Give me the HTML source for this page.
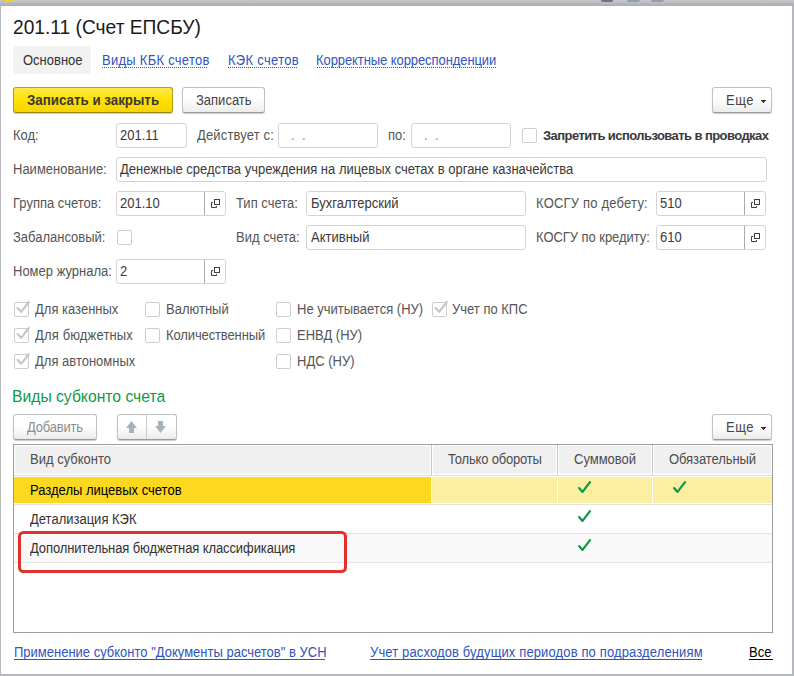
<!DOCTYPE html>
<html><head><meta charset="utf-8">
<style>
*{box-sizing:border-box;margin:0;padding:0}
html,body{width:794px;height:676px;overflow:hidden;background:#b0b2b5}
body{position:relative;font-family:"Liberation Sans",sans-serif;font-size:13px;color:#4d4d4d}
.abs{position:absolute}
.frame{position:absolute;left:0;top:0;width:794px;height:676px;background:linear-gradient(#c4c6c9,#b9bbbe 3px,#a8aaad 6px,#b6b8bb 6px)}
.panel{position:absolute;left:1px;top:6px;width:791px;height:668px;background:#fff}
.t{position:absolute;white-space:nowrap;line-height:15px;font-size:13px;transform:scaleY(1.1);transform-origin:0 7.5px}
.lbl{color:#555}
.val{color:#3a3a3a}
.inp{position:absolute;height:25px;border:1px solid #d4d4d4;border-radius:3px;background:#fff}
.sel{position:absolute;top:0;bottom:0;width:1px;background:#ababab}
.cb{position:absolute;width:15px;height:15px;border:1px solid #cdcdcd;border-radius:2px;background:#fff}
.btn{position:absolute;height:26px;border:1px solid #c2c2c2;border-bottom-color:#9a9a9a;border-radius:3px;background:linear-gradient(#fff 0%,#fff 45%,#ececec 100%);box-shadow:0 1px 1px rgba(0,0,0,.22)}
.link{color:#2f55bd}
.ul{position:absolute;height:1px;background:#2f55bd}
.dl{position:absolute;height:1px;background:repeating-linear-gradient(90deg,#2f55bd 0 1px,transparent 1px 2px)}
.hc{position:absolute;top:445px;height:30px;border:1px solid #fff;background:#f0f0f0}
.vs{position:absolute;top:445px;width:1px;height:30px;background:#c9c9c9}
.hs{position:absolute;left:14px;width:758px;height:1px;background:#e2e2e2}
</style></head><body>
<div class="frame"></div>
<div class="panel"></div>
<div class="abs" style="left:4px;top:-3.5px;width:10px;height:5.5px;border-radius:50%;background:#f3d21e"></div>
<div class="abs" style="left:601px;top:0;width:12px;height:1.5px;border-radius:0 0 2px 2px;background:#66758a"></div>
<div class="abs" style="left:627px;top:0;width:13px;height:1.8px;border-radius:0 0 3px 3px;background:#939fab"></div>
<div class="abs" style="left:651px;top:0;width:13px;height:1.8px;border-radius:0 0 3px 3px;background:#939fab"></div>

<!-- title -->
<div class="abs" style="left:13px;top:17px;font-size:19.2px;line-height:22px;color:#1a1a1a;white-space:nowrap;transform:scaleY(1.08);transform-origin:0 11px">201.11 (Счет ЕПСБУ)</div>

<!-- tabs -->
<div class="abs" style="left:13px;top:46px;width:78px;height:28px;background:#f2f2f2;border-radius:4px"></div>
<div class="t" style="left:23px;top:53px;color:#333">Основное</div>
<div class="t link" style="left:102px;top:53px;letter-spacing:0.27px">Виды КБК счетов</div>
<div class="dl" style="left:102px;top:67px;width:106px"></div>
<div class="t link" style="left:228px;top:53px;letter-spacing:0.3px">КЭК счетов</div>
<div class="dl" style="left:228px;top:67px;width:69px"></div>
<div class="t link" style="left:316px;top:53px;letter-spacing:-0.08px">Корректные корреспонденции</div>
<div class="dl" style="left:317px;top:67px;width:179px"></div>

<!-- buttons -->
<div class="abs" style="left:13px;top:87px;width:160px;height:26px;border:1px solid #b59c1e;border-bottom-color:#9a8414;border-radius:3px;background:linear-gradient(#fde94e,#ffe100 50%,#f7d500);box-shadow:0 1px 1px rgba(0,0,0,.22)"></div>
<div class="t" style="left:27px;top:93px;font-weight:bold;font-size:13.33px;color:#3c3a30">Записать и закрыть</div>
<div class="btn" style="left:182px;top:87px;width:83px"></div>
<div class="t" style="left:196px;top:93px;color:#444">Записать</div>
<div class="btn" style="left:712px;top:87px;width:60px"></div>
<div class="t" style="left:726px;top:93px;color:#444;letter-spacing:0.5px">Еще</div>
<div class="abs" style="left:761px;top:100px;width:5px;height:1px;background:#333"></div><div class="abs" style="left:762px;top:101px;width:3px;height:1px;background:#333"></div><div class="abs" style="left:763px;top:102px;width:1px;height:1px;background:#333"></div>

<!-- row 1 -->
<div class="t lbl" style="left:13px;top:128px">Код:</div>
<div class="inp" style="left:116px;top:123px;width:71px"></div>
<div class="t val" style="left:120px;top:128px">201.11</div>
<div class="t lbl" style="left:197px;top:128px;letter-spacing:0.15px">Действует с:</div>
<div class="inp" style="left:278px;top:123px;width:100px"></div>
<div class="t" style="left:291px;top:128px;color:#8a8a8a">.</div><div class="t" style="left:302px;top:128px;color:#8a8a8a">.</div>
<div class="t lbl" style="left:388px;top:128px">по:</div>
<div class="inp" style="left:411px;top:123px;width:100px"></div>
<div class="t" style="left:424px;top:128px;color:#8a8a8a">.</div><div class="t" style="left:435px;top:128px;color:#8a8a8a">.</div>
<div class="cb" style="left:522px;top:128px"></div>
<div class="t" style="left:543px;top:128px;font-weight:bold;color:#3a3a3a;letter-spacing:-0.57px;transform:none">Запретить использовать в проводках</div>

<!-- row 2 -->
<div class="t lbl" style="left:13px;top:162px">Наименование:</div>
<div class="inp" style="left:116px;top:157px;width:651px"></div>
<div class="t val" style="left:120px;top:162px">Денежные средства учреждения на лицевых счетах в органе казначейства</div>

<!-- row 3 -->
<div class="t lbl" style="left:13px;top:196px">Группа счетов:</div>
<div class="inp" style="left:116px;top:191px;width:110px"><div class="sel" style="left:87px"></div></div>
<div class="t val" style="left:120px;top:196px">201.10</div>
<div class="t lbl" style="left:236px;top:196px">Тип счета:</div>
<div class="inp" style="left:306px;top:191px;width:220px"></div>
<div class="t val" style="left:311px;top:196px">Бухгалтерский</div>
<div class="t lbl" style="left:536px;top:196px;letter-spacing:0.2px">КОСГУ по дебету:</div>
<div class="inp" style="left:656px;top:191px;width:110px"><div class="sel" style="left:87px"></div></div>
<div class="t val" style="left:660px;top:196px">510</div>

<!-- row 4 -->
<div class="t lbl" style="left:13px;top:230px">Забалансовый:</div>
<div class="cb" style="left:117px;top:230px"></div>
<div class="t lbl" style="left:236px;top:230px">Вид счета:</div>
<div class="inp" style="left:306px;top:225px;width:220px"></div>
<div class="t val" style="left:311px;top:230px">Активный</div>
<div class="t lbl" style="left:536px;top:230px;letter-spacing:-0.05px">КОСГУ по кредиту:</div>
<div class="inp" style="left:656px;top:225px;width:110px"><div class="sel" style="left:87px"></div></div>
<div class="t val" style="left:660px;top:230px">610</div>

<!-- row 5 -->
<div class="t lbl" style="left:13px;top:264px">Номер журнала:</div>
<div class="inp" style="left:116px;top:259px;width:110px"><div class="sel" style="left:87px"></div></div>
<div class="t val" style="left:120px;top:264px">2</div>

<svg class="abs" style="left:0;top:0" width="794" height="676">
<defs>
<g id="ic" fill="none" stroke="#404040" stroke-width="1">
<rect x="3.5" y="0.5" width="5" height="5"/>
<path d="M2 3.5H0.5V8.5H5.5V7"/>
</g>
<g id="ck" fill="none" stroke="#c6c6c6" stroke-width="2.2" stroke-linecap="round" stroke-linejoin="round">
<path d="M3.6 7 L7.2 10.8 L14.8 1"/>
</g>
<g id="gk" fill="none" stroke="#0f9a46" stroke-width="2.3" stroke-linecap="round" stroke-linejoin="round">
<path d="M0.1 6.1 L3.5 9.9 L11 0.1"/>
</g>
</defs>
<use href="#ic" x="211" y="199"/>
<use href="#ic" x="751" y="199"/>
<use href="#ic" x="751" y="233"/>
<use href="#ic" x="211" y="267"/>
</svg>

<!-- checkboxes -->
<div class="cb" style="left:14px;top:302px"></div>
<div class="t lbl" style="left:35px;top:302px">Для казенных</div>
<div class="cb" style="left:14px;top:328px"></div>
<div class="t lbl" style="left:35px;top:328px;letter-spacing:0.15px">Для бюджетных</div>
<div class="cb" style="left:14px;top:354px"></div>
<div class="t lbl" style="left:35px;top:354px">Для автономных</div>

<div class="cb" style="left:145px;top:302px"></div>
<div class="t lbl" style="left:166px;top:302px">Валютный</div>
<div class="cb" style="left:145px;top:328px"></div>
<div class="t lbl" style="left:166px;top:328px;letter-spacing:-0.12px">Количественный</div>

<div class="cb" style="left:276px;top:302px"></div>
<div class="t lbl" style="left:297px;top:302px">Не учитывается (НУ)</div>
<div class="cb" style="left:276px;top:328px"></div>
<div class="t lbl" style="left:297px;top:328px">ЕНВД (НУ)</div>
<div class="cb" style="left:276px;top:354px"></div>
<div class="t lbl" style="left:297px;top:354px">НДС (НУ)</div>

<div class="cb" style="left:432px;top:302px"></div>
<div class="t lbl" style="left:452px;top:302px">Учет по КПС</div>

<svg class="abs" style="left:0;top:0" width="794" height="676">
<use href="#ck" x="14" y="301"/>
<use href="#ck" x="14" y="327"/>
<use href="#ck" x="14" y="353"/>
<use href="#ck" x="432" y="301"/>
</svg>

<!-- heading -->
<div class="abs" style="left:12px;top:388px;font-size:15.7px;line-height:18px;color:#0d9a45;white-space:nowrap;transform:scaleY(1.06);transform-origin:0 9px">Виды субконто счета</div>

<!-- table command bar -->
<div class="btn" style="left:13px;top:414px;width:84px"></div>
<div class="t" style="left:27px;top:420px;color:#8c8c8c;letter-spacing:-0.2px">Добавить</div>
<div class="btn" style="left:117px;top:414px;width:60px"><div class="abs" style="left:28px;top:0;bottom:0;width:1px;background:#c9c9c9"></div></div>
<svg class="abs" style="left:0;top:0" width="794" height="676">
<path d="M126 428 L131.5 421 L137 428 H134 V433 H129 V428 Z" fill="#a9b3bb"/>
<path d="M155 426 L160.5 433 L166 426 H163 V421 H158 V426 Z" fill="#a9b3bb"/>
</svg>
<div class="btn" style="left:712px;top:414px;width:60px"></div>
<div class="t" style="left:726px;top:420px;color:#444;letter-spacing:0.5px">Еще</div>
<div class="abs" style="left:761px;top:427px;width:5px;height:1px;background:#333"></div><div class="abs" style="left:762px;top:428px;width:3px;height:1px;background:#333"></div><div class="abs" style="left:763px;top:429px;width:1px;height:1px;background:#333"></div>

<!-- table -->
<div class="abs" style="left:13px;top:444px;width:760px;height:189px;border:1px solid #9c9c9c;background:#fff"></div>
<!-- header -->
<div class="hc" style="left:14px;width:417px"></div>
<div class="hc" style="left:432px;width:125px"></div>
<div class="hc" style="left:558px;width:94px"></div>
<div class="hc" style="left:653px;width:119px"></div>
<div class="vs" style="left:431px"></div>
<div class="vs" style="left:557px"></div>
<div class="vs" style="left:652px"></div>
<div class="abs" style="left:14px;top:475px;width:758px;height:1px;background:#dcdce2"></div>
<div class="t" style="left:30px;top:452px;color:#4d4d4d">Вид субконто</div>
<div class="t" style="left:448px;top:452px;color:#4d4d4d;letter-spacing:-0.18px">Только обороты</div>
<div class="t" style="left:574px;top:452px;color:#4d4d4d">Суммовой</div>
<div class="t" style="left:669px;top:452px;color:#4d4d4d;letter-spacing:-0.08px">Обязательный</div>

<!-- row 1 -->
<div class="abs" style="left:14px;top:477px;width:417px;height:26px;background:#fcd91f"></div>
<div class="abs" style="left:432px;top:477px;width:125px;height:26px;background:#fcefa2"></div>
<div class="abs" style="left:558px;top:477px;width:94px;height:26px;background:#fcefa2"></div>
<div class="abs" style="left:653px;top:477px;width:119px;height:26px;background:#fcefa2"></div>
<div class="t" style="left:30px;top:483px;color:#000">Разделы лицевых счетов</div>
<div class="hs" style="top:504px"></div>
<!-- row 2 -->
<div class="t" style="left:30px;top:512px;color:#333">Детализация КЭК</div>
<div class="hs" style="top:533px"></div>
<!-- row 3 -->
<div class="abs" style="left:14px;top:534px;width:758px;height:28px;background:#f9f9f9"></div>
<div class="t" style="left:30px;top:541px;color:#333;letter-spacing:-0.1px">Дополнительная бюджетная классификация</div>
<div class="hs" style="top:562px"></div>

<svg class="abs" style="left:0;top:0" width="794" height="676">
<use href="#gk" x="579" y="482"/>
<use href="#gk" x="674" y="482"/>
<use href="#gk" x="579" y="511"/>
<use href="#gk" x="579" y="540"/>
<rect x="19.5" y="532.5" width="326" height="39" rx="4" fill="none" stroke="#e0322a" stroke-width="3"/>
</svg>

<!-- bottom links -->
<div class="t link" style="left:14px;top:645px">Применение субконто "Документы расчетов" в УСН</div>
<div class="ul" style="left:14px;top:659px;width:311px"></div>
<div class="t link" style="left:370px;top:645px;letter-spacing:0.13px">Учет расходов будущих периодов по подразделениям</div>
<div class="ul" style="left:370px;top:659px;width:332px"></div>
<div class="t" style="left:749px;top:645px;color:#000">Все</div>
<div class="ul" style="left:749px;top:659px;width:24px;background:#000"></div>

</body></html>
